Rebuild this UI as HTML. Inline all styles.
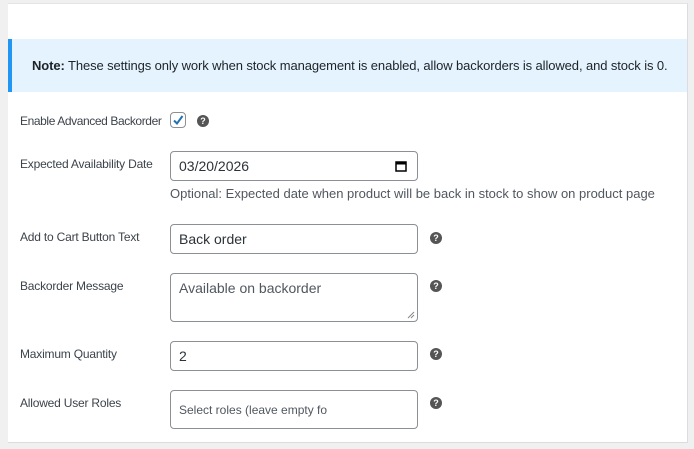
<!DOCTYPE html>
<html><head><style>
*{box-sizing:border-box}
body{margin:0;width:694px;height:449px;background:#f0f0f1;font-family:"Liberation Sans",sans-serif;position:relative;overflow:hidden;color:#3c434a}
.panel{position:absolute;left:8px;top:3px;width:680px;height:440px;background:#fff;border-top:1px solid #e4e4e6;border-right:1px solid #dcdcde;border-bottom:1px solid #dcdcde}
.note{position:absolute;left:8px;top:39px;width:679px;height:53px;background:#e5f3ff;border-left:4px solid #2196f3;font-size:13px;color:#1d2327;padding:19px 0 0 20px;letter-spacing:-0.1px}
.lbl{position:absolute;left:20px;font-size:12px;color:#3c434a;letter-spacing:-0.2px}
.inp{position:absolute;left:170px;width:248px;border:1px solid #8c8f94;border-radius:4px;background:#fff;font-size:14px;color:#2c3338;padding-left:8px}
.help{position:absolute;width:12px;height:12px;border-radius:50%;background:#555;color:#fff;font-size:9px;font-weight:bold;text-align:center;line-height:12px}
</style></head><body>
<div class="panel"></div>
<div class="note"><b>Note:</b> These settings only work when stock management is enabled, allow backorders is allowed, and stock is 0.</div>

<div class="lbl" style="top:114px;letter-spacing:-0.4px">Enable Advanced Backorder</div>
<div style="position:absolute;left:170px;top:112px;width:16px;height:16px;border:1px solid #8c8f94;border-radius:4px;background:#fff"><svg width="14" height="14" viewBox="0 0 14 14" style="position:absolute;left:0;top:0"><path d="M3 7.5 L6 10.5 L11.5 3" stroke="#2271b1" stroke-width="2" fill="none"/></svg></div>
<div class="help" style="left:197px;top:115px">?</div>

<div class="lbl" style="top:157px">Expected Availability Date</div>
<div class="inp" style="top:151px;height:30px;line-height:28px">03/20/2026
<svg width="12" height="12" viewBox="0 0 12 12" style="position:absolute;right:10px;top:8px"><rect x="1" y="2" width="10" height="9" fill="none" stroke="#000" stroke-width="1.5"/><rect x="1" y="2" width="10" height="2.5" fill="#000"/></svg></div>
<div style="position:absolute;left:170px;top:186px;font-size:13px;color:#50575e">Optional: Expected date when product will be back in stock to show on product page</div>

<div class="lbl" style="top:230px">Add to Cart Button Text</div>
<div class="inp" style="top:224px;height:30px;line-height:28px">Back order</div>
<div class="help" style="left:430px;top:232px">?</div>

<div class="lbl" style="top:279px">Backorder Message</div>
<div class="inp" style="top:273px;height:49px;padding-top:6px;color:#50575e">Available on backorder
<svg width="8" height="8" viewBox="0 0 8 8" style="position:absolute;right:2px;bottom:2px"><path d="M7 1 L1 7 M7 4 L4 7" stroke="#888" stroke-width="1"/></svg></div>
<div class="help" style="left:430px;top:280px">?</div>

<div class="lbl" style="top:347px">Maximum Quantity</div>
<div class="inp" style="top:341px;height:30px;line-height:28px">2</div>
<div class="help" style="left:430px;top:348px">?</div>

<div class="lbl" style="top:396px">Allowed User Roles</div>
<div class="inp" style="top:390px;height:39px;line-height:39px;font-size:12px;color:#50575e">Select roles (leave empty fo</div>
<div class="help" style="left:430px;top:397px">?</div>
</body></html>
